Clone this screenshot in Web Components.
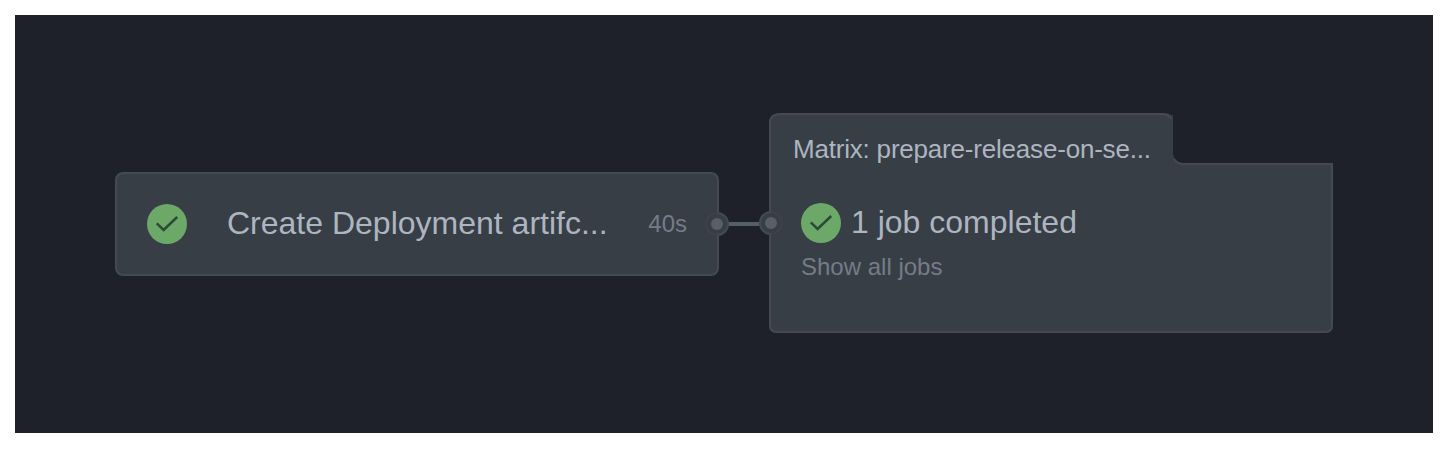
<!DOCTYPE html>
<html lang="en">
<head>
<meta charset="utf-8">
<title>Workflow graph</title>
<style>
body { margin: 0; background: #fff; font-family: "Liberation Sans", Arial, sans-serif; }
</style>
</head>
<body>
<workflow-graph>
  <job-card time="40s">Create Deployment artifc...</job-card>
  <graph-edge></graph-edge>
  <matrix-card>
    <span slot="title">Matrix: prepare-release-on-se...</span>
    <span slot="summary">1 job completed</span>
    <span slot="toggle">Show all jobs</span>
  </matrix-card>
</workflow-graph>
<script>
function define(name, markup, setup) {
  customElements.define(name, class extends HTMLElement {
    connectedCallback() {
      if (this.shadowRoot) return;
      this.attachShadow({ mode: 'open' }).innerHTML = markup;
      if (setup) setup(this);
    }
  });
}

define('status-icon', `
<style>:host{display:block;width:40px;height:40px;flex:none} svg{display:block}</style>
<svg width="40" height="40" viewBox="0 0 40 40">
  <circle cx="20" cy="20" r="20" fill="#6ca968"/>
  <path d="M9.8 19.4 16.6 25.9 30.2 13" fill="none" stroke="#2c4a35" stroke-width="2.5"/>
</svg>`);

define('graph-port', `
<style>:host{display:block;width:24px;height:24px} svg{display:block} :host(.to) .ring{transform:scaleX(-1);transform-origin:12px 12px}</style>
<svg width="24" height="24" viewBox="0 0 24 24">
  <circle cx="12" cy="12" r="12" fill="#383e45"/>
  <g class="ring" fill="none" stroke="#444a52">
    <path d="M12 1A11 11 0 0 1 12 23" stroke-width="2"/>
    <path d="M12 1A11 11 0 0 0 12 23" stroke-width="1.2" opacity=".6"/>
  </g>
  <circle cx="12" cy="12" r="6" fill="#575f68"/>
</svg>`);

define('graph-edge', `
<style>
:host{display:flex;align-items:center;width:50px;height:4px;margin-top:207px;background:#575e67;position:relative;z-index:1}
graph-port{position:absolute}
.from{left:-14px;top:-10px}
.to{right:-14px;top:-11px}
</style>
<graph-port class="from"></graph-port><graph-port class="to"></graph-port>`);

define('job-card', `
<style>
:host{box-sizing:border-box;display:flex;align-items:center;width:604px;height:104px;margin-top:157px;padding:0 30px;
 background:#383e45;border:2px solid #444a52;border-radius:8px}
.name{margin-left:40px;font-size:32px;line-height:40px;color:#adb5c1;white-space:nowrap;position:relative;top:-1px}
.time{margin-left:auto;font-size:24px;line-height:30px;color:#747c88}
</style>
<status-icon></status-icon><span class="name"><slot></slot></span><span class="time"></span>`,
el => { el.shadowRoot.querySelector('.time').textContent = el.getAttribute('time'); });

define('matrix-card', `
<style>
:host{display:grid;width:564px;height:220px;margin-top:98px}
svg,.content{grid-area:1/1}
svg{display:block}
.content{display:flex;flex-direction:column;align-items:flex-start;white-space:nowrap}
.title{margin:21px 0 0 24px;font-size:26px;line-height:30px;letter-spacing:-.2px;color:#adb5c1}
.summary{display:flex;align-items:center;margin:39px 0 0 32px}
.summary span{margin-left:10px;font-size:32px;line-height:40px;color:#adb5c1;position:relative;top:-1px}
.toggle{margin:9px 0 0 32px;font-size:24px;line-height:30px;color:#747c88}
</style>
<svg width="564" height="220" viewBox="0 0 564 220">
  <path d="M0 10Q0 0 12 0H394Q400 0 402 2H404V40A10 10 0 0 0 414 50H564V212Q564 220 556 220H8Q0 220 0 212Z" fill="#383e45"/>
  <path d="M405 46Q408 51 414 51H563V212Q563 219 556 219H8Q1 219 1 212V10Q1 1 12 1H393Q399 1 402 6" fill="none" stroke="#444a52" stroke-width="2"/>
</svg>
<div class="content">
  <div class="title"><slot name="title"></slot></div>
  <div class="summary"><status-icon></status-icon><span><slot name="summary"></slot></span></div>
  <div class="toggle"><slot name="toggle"></slot></div>
</div>`);

define('workflow-graph', `
<style>
:host{box-sizing:border-box;display:flex;align-items:flex-start;width:1418px;height:418px;margin:15px;padding-left:100px;background:#1e2129}
::slotted(*){flex:none}
</style><slot></slot>`);
</script>
</body>
</html>
